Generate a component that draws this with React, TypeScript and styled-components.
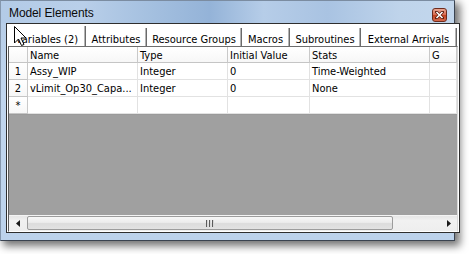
import React from 'react'
import styled, { createGlobalStyle } from 'styled-components'

const GlobalStyle = createGlobalStyle`
  body {
    margin: 0;
    background: #fff;
    font-family: 'Liberation Sans', Arial, sans-serif;
  }
`

const uiFont = `'DejaVu Sans Condensed', 'DejaVu Sans', 'Liberation Sans', sans-serif`

const Screen = styled.div`
  position: relative;
  width: 469px;
  height: 254px;
  overflow: hidden;
`

const Window = styled.div`
  width: 455px;
  height: 241px;
  box-sizing: border-box;
  border: 1px solid #3a4350;
  border-left-color: #8597ad;
  border-top-color: #7b8ca1;
  background: linear-gradient(#b4cbe6, #c1d6ee 40%, #bcd2eb);
  box-shadow: 4px 4px 8px 1px rgba(0, 0, 0, 0.55);
  display: flex;
  flex-direction: column;
`

const TitleBar = styled.div`
  height: 22px;
  flex: none;
  display: flex;
  align-items: center;
  justify-content: space-between;
  padding: 0 7px 0 8px;
  background: linear-gradient(
    to right,
    #b3cbe7 0%,
    #b9cfe9 18%,
    #a3bfdf 34%,
    #94b3d8 46%,
    #b6cde8 58%,
    #a9c3e2 72%,
    #bfd4eb 88%,
    #c3d7ed 100%
  );
`

const Title = styled.span`
  font-size: 12px;
  color: #0b0b0b;
  letter-spacing: -0.1px;
  margin-top: 2px;
`

const CloseButton = styled.div`
  width: 15px;
  height: 14px;
  box-sizing: border-box;
  align-self: flex-end;
  margin-bottom: 1px;
  border: 1px solid #6e2b1d;
  border-radius: 3px;
  background: linear-gradient(#eaa793, #d86c52 48%, #c34322 52%, #d56a4c);
  display: flex;
  align-items: center;
  justify-content: center;
`

const Frame = styled.div`
  flex: 1;
  display: flex;
  padding: 0 4px 7px 5px;
`

const Client = styled.div`
  flex: 1;
  display: flex;
  flex-direction: column;
  border: 1px solid #2e2e2e;
  background: #fff;
  padding: 0 1px;
`

const TabStrip = styled.div`
  height: 22px;
  flex: none;
  display: flex;
  align-items: flex-end;
  padding: 0 1px 0 1px;
  overflow: hidden;
`

const Tab = styled.div<{ $w: number; $active?: boolean }>`
  width: ${p => p.$w}px;
  flex: none;
  box-sizing: border-box;
  height: ${p => (p.$active ? 21 : 18)}px;
  margin-bottom: ${p => (p.$active ? -1 : 0)}px;
  position: relative;
  z-index: ${p => (p.$active ? 1 : 0)};
  background: #fff;
  border-right: 1px solid #6a6a6a;
  box-shadow: inset -1px 0 #b4b4b4;
  font-family: ${uiFont};
  font-stretch: condensed;
  font-size: 11px;
  line-height: 13px;
  color: #000;
  white-space: nowrap;
  display: flex;
  align-items: flex-end;
  justify-content: center;
  padding-bottom: ${p => (p.$active ? 1 : 0)}px;
`

const PageArea = styled.div`
  flex: 1;
  display: flex;
  flex-direction: column;
  border: 1px solid #fff;
  border-top-color: #6d6d6d;
  border-left-color: #5a5a5a;
  border-right-color: #d8d8d8;
`

const Grid = styled.div`
  display: grid;
  grid-template-columns: 19px 110px 90px 82px 120px 1fr;
  flex: none;
  background: #fff;
`

const Cell = styled.div<{ $head?: boolean; $h: number; $center?: boolean }>`
  height: ${p => p.$h}px;
  box-sizing: border-box;
  border-right: 1px solid ${p => (p.$head ? '#c9c9c9' : '#e2e2e2')};
  border-bottom: 1px solid ${p => (p.$head ? '#c5c5c5' : '#e2e2e2')};
  background: ${p => (p.$head ? 'linear-gradient(#ffffff, #f7f7f7)' : '#fff')};
  font-family: ${uiFont};
  font-stretch: condensed;
  font-size: 11px;
  line-height: 13px;
  color: #000;
  white-space: nowrap;
  overflow: hidden;
  display: flex;
  align-items: center;
  justify-content: ${p => (p.$center ? 'center' : 'flex-start')};
  padding: 1px ${p => (p.$center ? 0 : 2)}px 0 ${p => (p.$center ? 0 : 2)}px;
`

const Workspace = styled.div`
  flex: 1;
  background: #a0a0a0;
  border-top: 1px solid #9a9a9a;
`

const HScroll = styled.div`
  height: 16px;
  flex: none;
  display: flex;
  align-items: stretch;
  background: linear-gradient(#e6e6e6, #f1f1f1 30%, #eeeeee);
  border-top: 1px solid #f4f4f4;
  box-sizing: border-box;
`

const ArrowButton = styled.div`
  width: 17px;
  flex: none;
  display: flex;
  align-items: center;
  justify-content: center;
`

const Track = styled.div`
  flex: 1;
  display: flex;
  padding: 0 1px 1px 1px;
`

const Thumb = styled.div`
  width: 366px;
  box-sizing: border-box;
  border: 1px solid #9c9c9c;
  border-radius: 2px;
  background: linear-gradient(#f7f7f7, #ececec 45%, #dcdcdc 55%, #e2e2e2);
  display: flex;
  align-items: center;
  justify-content: center;
  gap: 1px;
`

const Grip = styled.div`
  width: 2px;
  height: 7px;
  background: linear-gradient(to right, #5c5c5c 50%, #d8d8d8 50%);
`

const Cursor = styled.svg`
  position: absolute;
  left: 14px;
  top: 26px;
  z-index: 5;
`

const tabs = [
  { label: 'Variables (2)', w: 77, active: true },
  { label: 'Attributes', w: 61 },
  { label: 'Resource Groups', w: 95 },
  { label: 'Macros', w: 48 },
  { label: 'Subroutines', w: 71 },
  { label: 'External Arrivals', w: 96 },
]

const columns = ['', 'Name', 'Type', 'Initial Value', 'Stats', 'G']

const rows = [
  ['1', 'Assy_WIP', 'Integer', '0', 'Time-Weighted', ''],
  ['2', 'vLimit_Op30_Capa...', 'Integer', '0', 'None', ''],
  ['*', '', '', '', '', ''],
]

export default function App() {
  return (
    <Screen>
      <GlobalStyle />
      <Window>
        <TitleBar>
          <Title>Model Elements</Title>
          <CloseButton>
            <svg width="9" height="8" viewBox="0 0 9 8">
              <path d="M1.5 1 L7.5 7 M7.5 1 L1.5 7" stroke="#5a1a0c" strokeWidth="3" strokeLinecap="square" />
              <path d="M1.5 1 L7.5 7 M7.5 1 L1.5 7" stroke="#fff" strokeWidth="1.6" />
            </svg>
          </CloseButton>
        </TitleBar>
        <Frame>
          <Client>
            <TabStrip>
              {tabs.map(t => (
                <Tab key={t.label} $w={t.w} $active={t.active}>
                  {t.label}
                </Tab>
              ))}
            </TabStrip>
            <PageArea>
              <Grid>
                {columns.map((c, i) => (
                  <Cell key={'h' + i} $head $h={16}>
                    {c}
                  </Cell>
                ))}
                {rows.map((r, ri) =>
                  r.map((v, ci) => (
                    <Cell key={ri + '-' + ci} $h={17} $head={ci === 0} $center={ci === 0}>
                      {v}
                    </Cell>
                  )),
                )}
              </Grid>
              <Workspace />
              <HScroll>
                <ArrowButton>
                  <svg width="4" height="7" viewBox="0 0 4 7">
                    <path d="M4 0 L0 3.5 L4 7 Z" fill="#1a1a1a" />
                  </svg>
                </ArrowButton>
                <Track>
                  <Thumb>
                    <Grip />
                    <Grip />
                    <Grip />
                  </Thumb>
                </Track>
                <ArrowButton>
                  <svg width="4" height="7" viewBox="0 0 4 7">
                    <path d="M0 0 L4 3.5 L0 7 Z" fill="#1a1a1a" />
                  </svg>
                </ArrowButton>
              </HScroll>
            </PageArea>
          </Client>
        </Frame>
      </Window>
      <Cursor width="13" height="21" viewBox="0 0 13 21">
        <path
          d="M0.5 0.5 L0.5 17 L4.5 13 L7.5 19.5 L10 18.5 L7 12 L12 12 Z"
          fill="#fff"
          stroke="#000"
          strokeWidth="1"
          strokeLinejoin="miter"
        />
      </Cursor>
    </Screen>
  )
}
